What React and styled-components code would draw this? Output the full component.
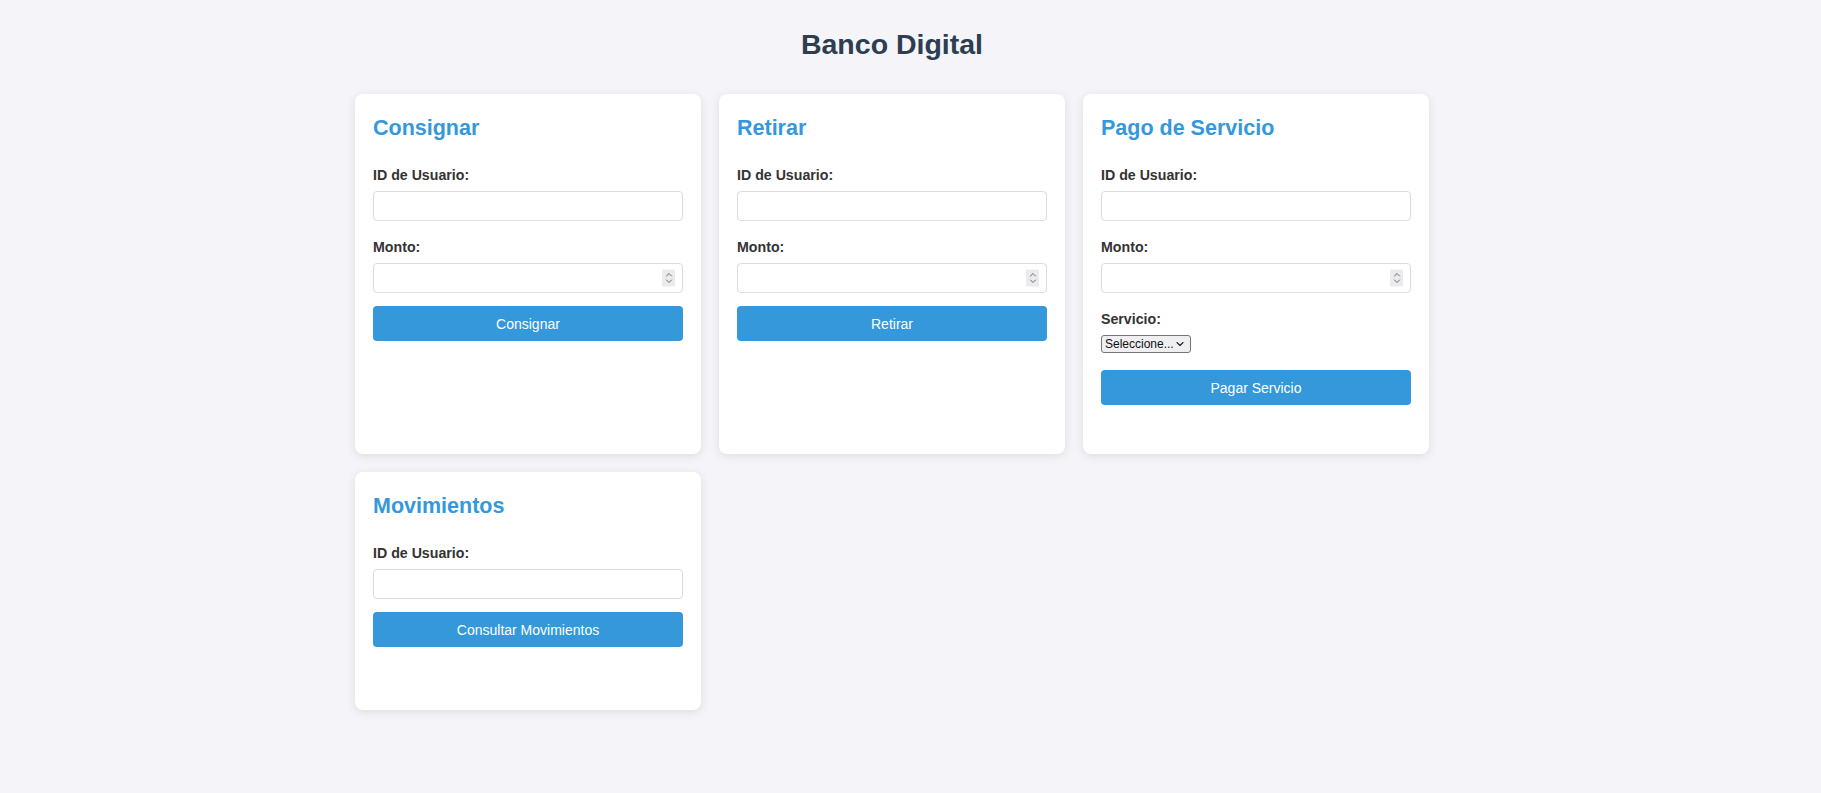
import styled, { createGlobalStyle } from "styled-components"

const GlobalStyle = createGlobalStyle`
    body {
        margin: 0;
        background: #f4f4f9;
        font-family: "Liberation Sans", Arial, sans-serif;
        color: #333;
    }
`

function CampoMonto() {
    return (
        <Campo>
            <Etiqueta>Monto:</Etiqueta>
            <EnvolturaNumero>
                <Entrada type="number" />
                <Giro>
                    <svg width="8" height="13" viewBox="0 0 8 13" fill="none" stroke="#6b6b6b" strokeWidth="1" strokeLinecap="round" strokeLinejoin="round">
                        <path d="M1.5 4.5 L4 2 L6.5 4.5" />
                        <path d="M1.5 8.5 L4 11 L6.5 8.5" />
                    </svg>
                </Giro>
            </EnvolturaNumero>
        </Campo>
    )
}

export default function App() {
    return (
        <>
            <GlobalStyle />
            <Page>
                <Titulo>Banco Digital</Titulo>
                <Grid>
                    <Card>
                        <CardTitulo>Consignar</CardTitulo>
                        <Campo>
                            <Etiqueta>ID de Usuario:</Etiqueta>
                            <Entrada type="text" />
                        </Campo>
                        <CampoMonto />
                        <Boton>Consignar</Boton>
                        <Resultado $alto={16} />
                    </Card>

                    <Card>
                        <CardTitulo>Retirar</CardTitulo>
                        <Campo>
                            <Etiqueta>ID de Usuario:</Etiqueta>
                            <Entrada type="text" />
                        </Campo>
                        <CampoMonto />
                        <Boton>Retirar</Boton>
                        <Resultado $alto={16} />
                    </Card>

                    <Card>
                        <CardTitulo>Pago de Servicio</CardTitulo>
                        <Campo>
                            <Etiqueta>ID de Usuario:</Etiqueta>
                            <Entrada type="text" />
                        </Campo>
                        <CampoMonto />
                        <Campo>
                            <Etiqueta>Servicio:</Etiqueta>
                            <EnvolturaSelector>
                                <Selector defaultValue="">
                                    <option value="">Seleccione...</option>
                                    <option value="agua">Agua</option>
                                    <option value="luz">Luz</option>
                                    <option value="gas">Gas</option>
                                </Selector>
                                <Flecha>
                                    <svg width="8" height="5" viewBox="0 0 8 5" fill="none" stroke="#222" strokeWidth="1.1" strokeLinecap="round" strokeLinejoin="round">
                                        <path d="M1 1 L4 4 L7 1" />
                                    </svg>
                                </Flecha>
                            </EnvolturaSelector>
                        </Campo>
                        <Boton>Pagar Servicio</Boton>
                        <Resultado $alto={16} />
                    </Card>

                    <Card>
                        <CardTitulo>Movimientos</CardTitulo>
                        <Campo>
                            <Etiqueta>ID de Usuario:</Etiqueta>
                            <Entrada type="text" />
                        </Campo>
                        <Boton>Consultar Movimientos</Boton>
                        <Resultado $alto={30} />
                    </Card>
                </Grid>
            </Page>
        </>
    )
}

const Page = styled.div`
    padding: 20px 57px 20px 20px;
`

const Titulo = styled.h1`
    margin: 8px 0 34px;
    text-align: center;
    font-size: 28.5px;
    line-height: 32px;
    font-weight: 700;
    color: #2c3e50;
`

const Grid = styled.div`
    display: grid;
    grid-template-columns: repeat(3, 1fr);
    column-gap: 18px;
    row-gap: 18px;
    max-width: 1074px;
    margin: 0 auto;
`

const Card = styled.div`
    background: #ffffff;
    border-radius: 8px;
    padding: 18px;
    box-shadow: 0 2px 10px rgba(0, 0, 0, 0.1);
`

const CardTitulo = styled.h2`
    margin: 4px 0 22px;
    font-size: 21.5px;
    line-height: 24px;
    font-weight: 700;
    color: #3498db;
`

const Campo = styled.div`
    display: flow-root;
    margin-bottom: 13px;
`

const Etiqueta = styled.label`
    display: block;
    padding-top: 5px;
    margin-bottom: 8px;
    font-size: 14.2px;
    line-height: 16px;
    font-weight: 700;
    color: #333;
`

const Entrada = styled.input`
    display: block;
    box-sizing: border-box;
    width: 100%;
    height: 30px;
    padding: 6px 8px;
    border: 1px solid #ddd;
    border-radius: 4px;
    font-family: "Liberation Sans", Arial, sans-serif;
    font-size: 14px;
    background: #fff;
    -moz-appearance: textfield;
    &::-webkit-inner-spin-button,
    &::-webkit-outer-spin-button {
        -webkit-appearance: none;
        margin: 0;
    }
`

const EnvolturaNumero = styled.div`
    position: relative;
`

const Giro = styled.span`
    position: absolute;
    right: 8px;
    top: 50%;
    transform: translateY(-50%);
    width: 13px;
    height: 17px;
    display: flex;
    align-items: center;
    justify-content: center;
    background: #ebebee;
    border-radius: 1px;
    pointer-events: none;
`

const EnvolturaSelector = styled.div`
    position: relative;
    width: 90px;
    margin: 5px 0 4px;
`

const Selector = styled.select`
    display: block;
    box-sizing: border-box;
    appearance: none;
    -webkit-appearance: none;
    width: 90px;
    height: 18px;
    padding: 0 16px 0 3px;
    border: 1px solid #767676;
    border-radius: 3px;
    background: #efeff2;
    color: #111;
    font-family: "Liberation Sans", Arial, sans-serif;
    font-size: 12px;
    line-height: 16px;
`

const Flecha = styled.span`
    position: absolute;
    right: 7px;
    top: 50%;
    transform: translateY(-50%);
    display: flex;
    pointer-events: none;
`

const Boton = styled.button`
    display: block;
    width: 100%;
    height: 35px;
    border: none;
    border-radius: 4px;
    background: #3498db;
    color: #ffffff;
    font-family: "Liberation Sans", Arial, sans-serif;
    font-size: 14px;
    cursor: pointer;
    &:hover {
        background: #2980b9;
    }
`

const Resultado = styled.div`
    margin-top: 15px;
    min-height: ${props => props.$alto}px;
`
